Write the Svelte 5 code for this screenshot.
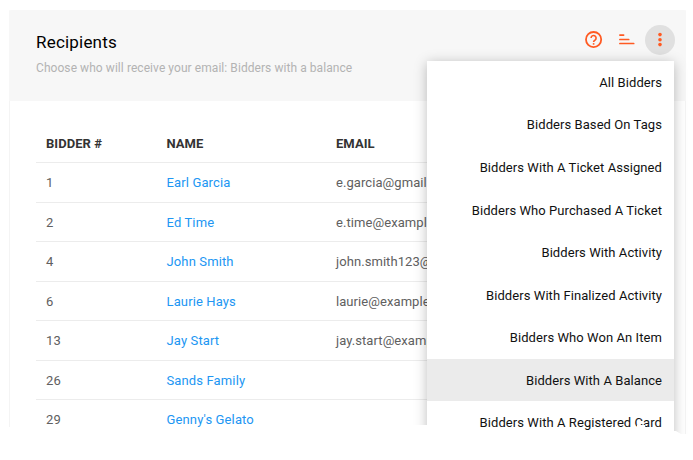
<script>
  const rows = [
    { id: '1', name: 'Earl Garcia', email: 'e.garcia@gmail.com' },
    { id: '2', name: 'Ed Time', email: 'e.time@example.com' },
    { id: '4', name: 'John Smith', email: 'john.smith123@example.com' },
    { id: '6', name: 'Laurie Hays', email: 'laurie@example.com' },
    { id: '13', name: 'Jay Start', email: 'jay.start@example.com' },
    { id: '26', name: 'Sands Family', email: '' },
    { id: '29', name: 'Genny\'s Gelato', email: '' }
  ];
  const options = [
    'All Bidders',
    'Bidders Based On Tags',
    'Bidders With A Ticket Assigned',
    'Bidders Who Purchased A Ticket',
    'Bidders With Activity',
    'Bidders With Finalized Activity',
    'Bidders Who Won An Item',
    'Bidders With A Balance',
    'Bidders With A Registered Card'
  ];
  const selected = 'Bidders With A Balance';
</script>

<div class="page">
  <section class="card">
    <header>
      <div class="heading">
        <h1>Recipients</h1>
        <p>Choose who will receive your email: Bidders with a balance</p>
      </div>
      <div class="actions">
        <svg class="help" width="18" height="18" viewBox="0 0 18 18">
          <circle cx="8.6" cy="8.6" r="7.6" fill="none" stroke="#ff5a22" stroke-width="1.8" />
          <path d="M6.1 7a2.5 2.5 0 1 1 4.2 1.8C9.2 9.7 8.6 10 8.6 11.1" fill="none" stroke="#ff5a22" stroke-width="1.6" />
          <rect x="7.8" y="12.1" width="1.6" height="1.6" fill="#ff5a22" />
        </svg>
        <svg class="sort" width="16" height="12" viewBox="0 0 16 12">
          <path d="M.9 1.1h3.7M.9 5.5h8.8M.9 9.5h13.8" stroke="#ff5a22" stroke-width="1.7" stroke-linecap="round" />
        </svg>
        <button aria-label="More">
          <svg width="30" height="30" viewBox="0 0 30 30" fill="#ff5a22">
            <circle cx="15" cy="9.6" r="1.8" />
            <circle cx="15" cy="14.7" r="1.8" />
            <circle cx="15" cy="19.6" r="1.8" />
          </svg>
        </button>
      </div>
    </header>
    <div class="table">
      <div class="row head"><span>BIDDER #</span><span>NAME</span><span>EMAIL</span></div>
      {#each rows as r}
        <div class="row"><span>{r.id}</span><span class="link">{r.name}</span><span>{r.email}</span></div>
      {/each}
    </div>
  </section>
  <ul class="menu">
    {#each options as o}
      <li class:active={o === selected}>{o}</li>
    {/each}
  </ul>
</div>

<style>
  :global(body) { background: #fff; overflow: hidden; }
  .page {
    position: relative;
    width: 693px;
    height: 460px;
    overflow: hidden;
    font-family: Roboto, sans-serif;
    font-size: 13px;
    letter-spacing: 0.07px;
    box-sizing: border-box;
    padding: 10px 7px 0 9px;
    clip-path: polygon(0 0, 693px 0, 693px 434px, 681px 434px, 676px 431px, 646px 431px, 645px 425px, 637px 425px, 636px 431px, 427px 431px, 427px 425px, 260px 425px, 260px 427px, 0 427px);
  }
  .card {
    box-sizing: border-box;
    height: 450px;
    border: 1px solid #f4f4f4;
    border-top: 0;
    border-radius: 2px;
  }
  header {
    display: flex;
    justify-content: space-between;
    height: 91px;
    margin: 0 -1px;
    padding: 0 11px 0 27px;
    box-sizing: border-box;
    background: #f7f7f7;
    border-radius: 2px 2px 0 0;
  }
  h1 {
    margin: 22px 0 0;
    font-size: 17px;
    line-height: 20px;
    font-weight: 400;
    letter-spacing: 0.2px;
    color: #000;
  }
  p {
    margin: 8px 0 0;
    font-size: 12px;
    line-height: 16px;
    letter-spacing: 0.065px;
    color: #b3b3b3;
  }
  .actions { display: flex; align-items: center; height: 30px; margin-top: 15px; }
  .help { margin-right: 16px; }
  .sort { margin-right: 10px; }
  button { width: 30px; height: 30px; padding: 0; border: 0; border-radius: 50%; background: #e0e0e0; }
  button svg { display: block; }
  .table { margin: 24px 26px 0; }
  .row {
    display: grid;
    grid-template-columns: 120.5px 169.5px 1fr;
    align-items: center;
    height: 39.5px;
    box-sizing: border-box;
    padding: 0.5px 0 0 10px;
    border-bottom: 1px solid #ececec;
    color: #606060;
    white-space: nowrap;
  }
  .head { height: 38px; padding-top: 0; font-weight: 700; color: #333; letter-spacing: 0.05px; }
  .link { color: #2196f3; letter-spacing: 0.13px; }
  .menu {
    position: absolute;
    left: 427px;
    top: 60.88px;
    width: 247px;
    height: 410px;
    margin: 0;
    padding: 0;
    list-style: none;
    background: #fff;
    box-shadow: 0 2px 12px rgba(0, 0, 0, 0.26);
  }
  li {
    height: 42.57px;
    line-height: 43px;
    padding-right: 12px;
    text-align: right;
    color: #111;
  }
  .active { background: #ebebeb; }
</style>
